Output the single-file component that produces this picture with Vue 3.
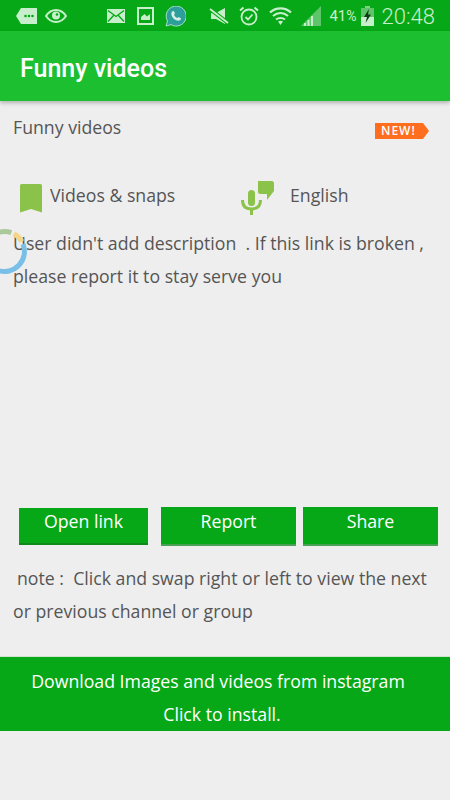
<script setup>
const buttons = [
  { label: "Open link", cls: "first" },
  { label: "Report", cls: "second" },
  { label: "Share", cls: "third" },
];
</script>

<template>
  <div class="screen">
    <div class="status-bar">
      <div class="status-left">
        <svg class="ic-msg" width="21" height="16" viewBox="0 0 21 16">
          <path d="M5 0H21V16H5L0 8Z" fill="#c8efcb" />
          <circle cx="9.5" cy="8" r="1.3" fill="#06a817" />
          <circle cx="13" cy="8" r="1.3" fill="#06a817" />
          <circle cx="16.500" cy="8" r="1.3" fill="#06a817" />
        </svg>
        <svg class="ic-eye" width="22" height="14" viewBox="0 0 22 14">
          <path d="M1 7C4 2.500 7.500 1 11 1s7 1.500 10 6c-3 4.500-6.500 6-10 6S4 11.500 1 7Z" fill="none" stroke="#c8efcb" stroke-width="2" />
          <circle cx="11" cy="6.500" r="4" fill="#c8efcb" />
          <circle cx="12" cy="5.500" r="1.300" fill="#06a817" />
        </svg>
        <svg class="ic-mail" width="18" height="14" viewBox="0 0 18 14">
          <rect width="18" height="14" fill="#c8efcb" />
          <path d="M1 1.500L9 7.500L17 1.500M1 12.500L7 6M17 12.500L11 6" fill="none" stroke="#06a817" stroke-width="1.300" />
        </svg>
        <svg class="ic-pic" width="17" height="18" viewBox="0 0 17 18">
          <rect x="1" y="1" width="15" height="16" fill="none" stroke="#c8efcb" stroke-width="2" />
          <path d="M4 13V10L7.500 7L10 9.500L13 7V13Z" fill="#c8efcb" />
        </svg>
        <svg class="ic-wa" width="21" height="21" viewBox="0 0 21 21">
          <path d="M1 20L2.500 15A10 10 0 1 1 6 18.600Z" fill="#2c9e9b" stroke="#a9dcc8" stroke-width="1" />
          <path d="M7 5.500L8.800 5L10 7.500L9 8.700C9.700 10.200 10.800 11.300 12.300 12L13.500 11L16 12.300L15.500 14C13.500 15.500 10.500 14.500 8.500 12.500S5.500 7.500 7 5.500Z" fill="#d5eee6" />
        </svg>
      </div>
      <div class="status-right">
        <svg class="ic-mute" width="20" height="18" viewBox="0 0 20 18">
          <path d="M2 6H7L16 1V17L7 12H2Z" fill="#c8efcb" />
          <path d="M1 2L19 16" stroke="#06a817" stroke-width="4" />
          <path d="M1 2L19 16" stroke="#c8efcb" stroke-width="1.800" />
        </svg>
        <svg class="ic-alarm" width="20" height="20" viewBox="0 0 20 20">
          <circle cx="10" cy="11" r="7.500" fill="none" stroke="#c8efcb" stroke-width="1.800" />
          <path d="M6.500 11L9 13.500L13.500 8.500" fill="none" stroke="#c8efcb" stroke-width="1.800" />
          <path d="M1 4.500L4.500 1.500M19 4.500L15.500 1.500" stroke="#c8efcb" stroke-width="2" />
        </svg>
        <svg class="ic-wifi" width="23" height="18" viewBox="0 0 23 18">
          <path d="M1 5.500C7 0 16 0 22 5.500M4 9C8.500 5 14.500 5 19 9M7 12.500C9.500 10.500 13.500 10.500 16 12.500" fill="none" stroke="#c8efcb" stroke-width="2.200" />
          <path d="M9 14.500L11.500 18L14 14.500C12.500 13.500 10.500 13.500 9 14.500Z" fill="#c8efcb" />
        </svg>
        <svg class="ic-signal" width="20" height="20" viewBox="0 0 20 20">
          <path d="M0 20L20 0V20Z" fill="#5fc56a" />
          <path d="M3 20V17H5V20ZM6.500 20V14H8.500V20ZM10 20V10H12V20Z" fill="#c8efcb" />
        </svg>
        <span class="battery-text">41<small>%</small></span>
        <svg class="ic-battery" width="13" height="20" viewBox="0 0 13 20">
          <rect x="4" y="0" width="5" height="2" fill="#7fd088" />
          <rect x="0" y="2" width="13" height="18" fill="#c8efcb" />
          <rect x="0" y="2" width="13" height="9" fill="#5fc56a" />
          <path d="M8 3L3 11H6L4.500 17L10 8.500H7Z" fill="#123b1a" />
        </svg>
        <span class="clock">20:48</span>
      </div>
    </div>

    <header class="app-bar">Funny videos</header>

    <main class="content">
      <div class="title-row">
        <span>Funny videos</span>
        <span class="new-badge">NEW!</span>
      </div>

      <div class="meta-row">
        <div class="meta-left">
          <svg width="22" height="29" viewBox="0 0 22 29">
            <path d="M1.500 0H20.500A1.500 1.500 0 0 1 22 1.500V28.500L11 25L0 28.500V1.500A1.500 1.500 0 0 1 1.500 0Z" fill="#8bc34a" />
          </svg>
          <span>Videos &amp; snaps</span>
        </div>
        <div class="meta-right">
          <svg width="34" height="34" viewBox="0 0 34 34">
            <path d="M17 0H30A2.500 2.500 0 0 1 33 2.500V10L26 19V13H19.500A2.500 2.500 0 0 1 17 10.500Z" fill="#8bc34a" />
            <rect x="7" y="9" width="7" height="16" rx="3.500" fill="#8bc34a" />
            <path d="M1.500 19C1.500 25 5 28 10.500 28S19.500 25 19.500 19" fill="none" stroke="#8bc34a" stroke-width="3" />
            <rect x="9" y="28" width="3" height="6" fill="#8bc34a" />
          </svg>
          <span>English</span>
        </div>
      </div>

      <p class="description">User didn't add description &nbsp;. If this link is broken , please report it to stay serve you</p>

      <div class="actions">
        <button v-for="b in buttons" :key="b.label" class="action" :class="b.cls">{{ b.label }}</button>
      </div>

      <p class="note"><span class="note-indent">note :&nbsp; Click and swap right or left to view the next</span> or previous channel or group</p>
    </main>

    <div class="install">
      <div class="line-one">Download Images and videos from instagram</div>
      <div class="line-two">Click to install.</div>
    </div>

    <svg class="spinner" width="49" height="49" viewBox="0 0 49 49">
      <path d="M19.300 5.200A20 20 0 0 1 31.300 5.700" fill="none" stroke="#aac89a" stroke-width="5" />
      <path d="M33.900 6.800A20 20 0 0 1 41.800 14.500" fill="none" stroke="#f4d58a" stroke-width="5" />
      <path d="M43 17A20 20 0 0 1 17.700 43.300" fill="none" stroke="#79bfe8" stroke-width="5" />
    </svg>
  </div>
</template>

<style>
html, body {
  margin: 0;
  background: #eeeeee;
}
</style>

<style scoped>
.screen {
  position: relative;
  width: 450px;
  height: 800px;
  overflow: hidden;
  background: #eeeeee;
  font-family: "Open Sans", sans-serif;
  font-size: 17.7px;
  color: #555555;
}

.status-bar {
  height: 31px;
  box-sizing: border-box;
  padding-top: 1px;
  background: #06a817;
  display: flex;
  align-items: center;
  justify-content: space-between;
  color: #c8efcb;
}

.status-left,
.status-right {
  display: flex;
  align-items: center;
}

.status-left {
  padding-left: 16px;
}

.ic-eye { margin-left: 8px; }
.ic-mail { margin-left: 40px; }
.ic-pic { margin-left: 12px; }
.ic-wa { margin-left: 11px; }

.status-right {
  padding-right: 15px;
}

.ic-alarm { margin-left: 10px; }
.ic-wifi { margin-left: 10px; }
.ic-signal { margin-left: 9px; }
.ic-battery { margin-left: 4px; }

.battery-text {
  margin-left: 8px;
  font-family: Roboto, sans-serif;
  font-size: 15px;
}

.battery-text small {
  font-size: 14px;
}

.clock {
  margin-left: 8px;
  font-family: Roboto, sans-serif;
  font-size: 22px;
  font-weight: 300;
}

.app-bar {
  height: 70px;
  box-sizing: border-box;
  padding: 4px 20px 0;
  display: flex;
  align-items: center;
  background: #1cbf2f;
  color: #ffffff;
  font-family: Roboto, sans-serif;
  font-size: 25px;
  font-weight: 500;
  box-shadow: 0 2px 4px rgba(0, 0, 0, 0.25);
}

.content {
  height: 555px;
}

.title-row {
  display: flex;
  align-items: center;
  justify-content: space-between;
  padding: 13px 22px 0 13px;
  height: 26px;
}

.new-badge {
  width: 54px;
  height: 16px;
  margin-top: 8px;
  margin-right: -1px;
  box-sizing: border-box;
  padding-left: 6px;
  background: #ff6d1f;
  clip-path: polygon(0 0, 48px 0, 100% 50%, 48px 100%, 0 100%);
  color: #ffffff;
  font-size: 12px;
  font-weight: 600;
  letter-spacing: 1px;
  line-height: 16px;
}

.meta-row {
  display: flex;
  align-items: center;
  margin-top: 40px;
  height: 36px;
}

.meta-left,
.meta-right {
  display: flex;
  align-items: center;
}

.meta-left span,
.meta-right span {
  margin-bottom: 7px;
}

.meta-left {
  width: 240px;
  padding-left: 20px;
  box-sizing: border-box;
  gap: 8px;
}

.meta-right {
  padding-left: 1px;
  gap: 15px;
}

.description {
  margin: 11px 13px 0;
  width: 424px;
  line-height: 33px;
}

.actions {
  display: flex;
  align-items: flex-start;
  margin-top: 214px;
  padding-left: 19px;
}

.action {
  height: 39px;
  box-sizing: border-box;
  padding: 0 0 9px;
  border: none;
  border-bottom: 2px solid #4aa055;
  background: #06a817;
  color: #ffffff;
  font-family: "Open Sans", sans-serif;
  font-size: 17.7px;
}

.first {
  width: 129px;
  height: 37px;
  margin-top: 1px;
  border-bottom-color: #0d8a1a;
}

.second { width: 135px; margin-left: 13px; }
.third { width: 135px; margin-left: 7px; }

.note {
  margin: 16px 13px 0;
  width: 424px;
  line-height: 33px;
}

.note-indent {
  padding-left: 4px;
}

.install {
  height: 75px;
  box-sizing: border-box;
  padding-top: 8px;
  border-top: 1px solid #cfe5d0;
  background: #06a817;
  color: #ffffff;
  text-align: center;
  line-height: 33px;
}

.line-one { padding-right: 14px; }
.line-two { padding-right: 6px; }

.spinner {
  position: absolute;
  left: -20px;
  top: 227px;
}
</style>
